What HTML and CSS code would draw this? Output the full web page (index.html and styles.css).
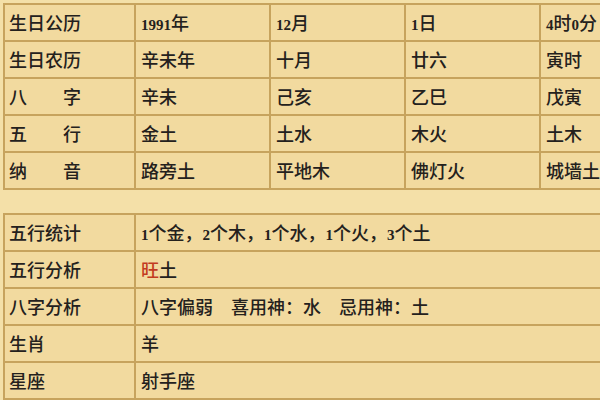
FILE: index.html
```html
<!DOCTYPE html>
<html lang="zh-CN">
<head>
<meta charset="utf-8">
<title>生辰八字</title>
<link rel="stylesheet" href="styles.css">
</head>
<body>
<div class="page">
  <div class="grid grid-birth">
    <div class="cell">生日公历</div>
    <div class="cell"><span class="num">1991</span>年</div>
    <div class="cell"><span class="num">12</span>月</div>
    <div class="cell"><span class="num">1</span>日</div>
    <div class="cell"><span class="num">4</span>时<span class="num">0</span>分</div>

    <div class="cell">生日农历</div>
    <div class="cell">辛未年</div>
    <div class="cell">十月</div>
    <div class="cell">廿六</div>
    <div class="cell">寅时</div>

    <div class="cell">八　　字</div>
    <div class="cell">辛未</div>
    <div class="cell">己亥</div>
    <div class="cell">乙巳</div>
    <div class="cell">戊寅</div>

    <div class="cell">五　　行</div>
    <div class="cell">金土</div>
    <div class="cell">土水</div>
    <div class="cell">木火</div>
    <div class="cell">土木</div>

    <div class="cell">纳　　音</div>
    <div class="cell">路旁土</div>
    <div class="cell">平地木</div>
    <div class="cell">佛灯火</div>
    <div class="cell">城墙土</div>
  </div>

  <div class="grid grid-analysis">
    <div class="cell">五行统计</div>
    <div class="cell"><span class="num">1</span>个金，<span class="num">2</span>个木，<span class="num">1</span>个水，<span class="num">1</span>个火，<span class="num">3</span>个土</div>

    <div class="cell">五行分析</div>
    <div class="cell"><span class="hot">旺</span>土</div>

    <div class="cell">八字分析</div>
    <div class="cell">八字偏弱　喜用神：水　忌用神：土</div>

    <div class="cell">生肖</div>
    <div class="cell">羊</div>

    <div class="cell">星座</div>
    <div class="cell">射手座</div>
  </div>
</div>
</body>
</html>
```

FILE: styles.css
```css
html, body {
  margin: 0;
  padding: 0;
  overflow: hidden;
  background: #f4e0a8;
}

.page {
  padding: 3px 0 0 3px;
  width: 900px;
  font-family: "Noto Sans CJK SC", "Noto Sans", sans-serif;
  font-size: 18px;
  font-weight: 500;
  color: #24211d;
}

.grid {
  display: grid;
  border-top: 2px solid #c7a35d;
  border-left: 2px solid #c7a35d;
  width: max-content;
}

.grid-birth {
  grid-template-columns: 131px 135px 135px 135px 135px;
}

.grid-analysis {
  margin-top: 23px;
  grid-template-columns: 131px 620px;
}

.cell {
  box-sizing: border-box;
  height: 37px;
  padding-left: 4px;
  line-height: 35px;
  white-space: nowrap;
  overflow: hidden;
  background: #f2da9f;
  border-right: 2px solid #c7a35d;
  border-bottom: 2px solid #c7a35d;
}

.grid-birth .cell:not(:nth-child(5n+1)),
.grid-analysis .cell:nth-child(2n) {
  padding-left: 5px;
}

.num {
  font-family: "Liberation Serif", serif;
  font-size: 15px;
  font-weight: 700;
}

.hot {
  color: #c23b1f;
}
```
